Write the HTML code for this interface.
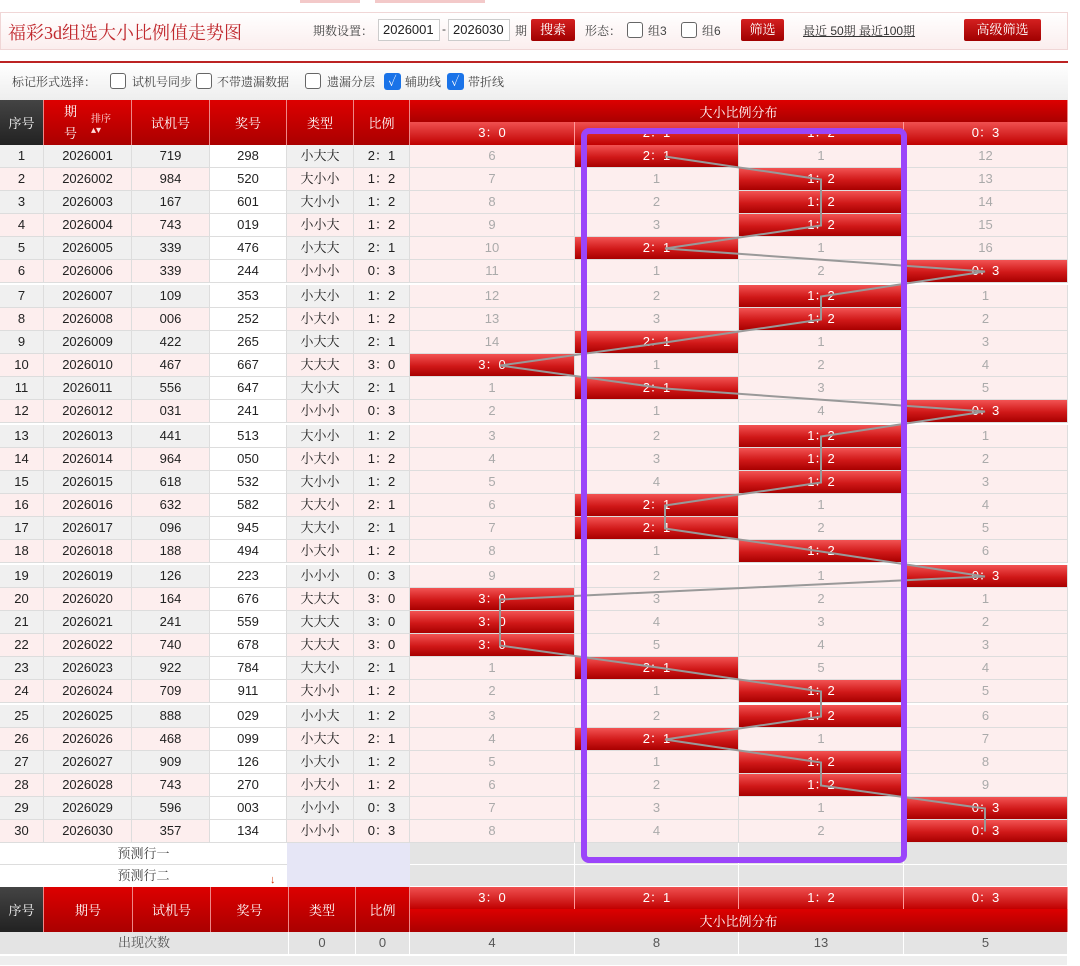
<!DOCTYPE html>
<html><head><meta charset="utf-8"><style>
*{margin:0;padding:0;box-sizing:border-box}
body{width:1080px;height:962px;overflow:hidden;background:#fff;font-family:"Liberation Sans","Noto Serif CJK SC",serif;font-size:13px;color:#222;position:relative}
.abs{position:absolute}
.top{left:0;top:12px;width:1068px;height:38px;border:1px solid #f0d6d6;background:linear-gradient(#fff,#fbeeee)}
.title{left:8px;top:19px;font-size:18px;color:#c0282d;font-family:"Liberation Serif","Noto Serif CJK SC",serif}
.lbl{font-size:12px;color:#444;top:22px}
.inp{top:19px;height:22px;border:1px solid #ccc;background:#fff;font-size:13px;line-height:20px;padding-left:4px;font-family:"Liberation Sans",sans-serif}
.btn{background:linear-gradient(#d42020,#a00000);color:#fff;font-size:13px;text-align:center;line-height:22px;height:22px;border-radius:2px}
.cb{width:16px;height:16px;border:1px solid #666;border-radius:3px;background:#fff}
.cbc{width:17px;height:17px;border-radius:3px;background:#1a73e8;color:#fff;font-size:13px;line-height:17px;text-align:center}
.opt{left:0;top:61px;width:1068px;height:39px;border-top:2px solid #b22;background:linear-gradient(#fff,#eee)}
.r{position:absolute;left:0;height:23px;display:flex;width:1068px}
.r i{font-style:normal;display:block;height:23px;line-height:22px;text-align:center;border-right:1px solid #ddd;border-bottom:1px solid #ddd;font-size:13px}
.r i:nth-child(1){width:44px}.r i:nth-child(2){width:88px}.r i:nth-child(3){width:78px}.r i:nth-child(4){width:77px}.r i:nth-child(5){width:67px}.r i:nth-child(6){width:56px}.r i:nth-child(7){width:165px}.r i:nth-child(8){width:164px}.r i:nth-child(9){width:165px}.r i:nth-child(10){width:164px}
.o i{background:#f0f0f0}.e i{background:#fdeeee}
.r i.w{background:#fff}
.r i.m{background:#fdeeee;color:#aaa}
.r i.h{background:linear-gradient(#f25353,#d01818 55%,#a80000);color:#fff}
.sep{border-bottom:3px solid #ccc}
.hd{background:linear-gradient(#d00,#a00);color:#fff;font-size:13px;display:flex;align-items:center;justify-content:center;position:absolute;border-right:1px solid #e88}
.sub{background:linear-gradient(#f05050,#c00000);color:#fff;position:absolute;text-align:center;line-height:22px;border-right:1px solid #f99;font-size:13px}
.g{background:#e4e4e4;position:absolute;border-right:1px solid #fff;border-bottom:1px solid #fff;text-align:center;line-height:22px;color:#555}
</style></head><body>
<div class="abs" style="left:300px;top:0;width:60px;height:3px;background:#f3c9c9"></div>
<div class="abs" style="left:375px;top:0;width:110px;height:3px;background:#f3c9c9"></div>
<div class="abs top"></div>
<div class="abs title">福彩3d组选大小比例值走势图</div>
<div class="abs lbl" style="left:313px">期数设置：</div>
<div class="abs inp" style="left:378px;width:62px">2026001</div>
<div class="abs lbl" style="left:442px">-</div>
<div class="abs inp" style="left:448px;width:62px">2026030</div>
<div class="abs lbl" style="left:515px">期</div>
<div class="abs btn" style="left:531px;top:19px;width:44px">搜索</div>
<div class="abs lbl" style="left:585px">形态：</div>
<div class="abs cb" style="left:627px;top:22px"></div><div class="abs lbl" style="left:648px">组3</div>
<div class="abs cb" style="left:681px;top:22px"></div><div class="abs lbl" style="left:702px">组6</div>
<div class="abs btn" style="left:741px;top:19px;width:43px">筛选</div>
<div class="abs lbl" style="left:803px;text-decoration:underline;color:#333">最近 50期 最近100期</div>
<div class="abs btn" style="left:964px;top:19px;width:77px">高级筛选</div>
<div class="abs opt"></div>
<div class="abs lbl" style="left:12px;top:73px">标记形式选择：</div>
<div class="abs cb" style="left:110px;top:73px"></div><div class="abs lbl" style="left:132px;top:73px">试机号同步</div>
<div class="abs cb" style="left:196px;top:73px"></div><div class="abs lbl" style="left:217px;top:73px">不带遗漏数据</div>
<div class="abs cb" style="left:305px;top:73px"></div><div class="abs lbl" style="left:327px;top:73px">遗漏分层</div>
<div class="abs cbc" style="left:384px;top:73px">✓</div><div class="abs lbl" style="left:405px;top:73px">辅助线</div>
<div class="abs cbc" style="left:447px;top:73px">✓</div><div class="abs lbl" style="left:468px;top:73px">带折线</div>

<div class="hd" style="left:0;top:100px;width:44px;height:45px;background:linear-gradient(#444,#222)">序号</div>
<div class="hd" style="left:44px;top:100px;width:88px;height:45px"><span style="line-height:22px;margin-right:14px">期<br>号</span><span style="font-size:10px;color:#fdd">排序<br>▴▾</span></div>
<div class="hd" style="left:132px;top:100px;width:78px;height:45px">试机号</div>
<div class="hd" style="left:210px;top:100px;width:77px;height:45px">奖号</div>
<div class="hd" style="left:287px;top:100px;width:67px;height:45px">类型</div>
<div class="hd" style="left:354px;top:100px;width:56px;height:45px">比例</div>
<div class="hd" style="left:410px;top:100px;width:658px;height:22px">大小比例分布</div>
<div class="sub" style="left:410px;top:122px;width:165px;height:23px">3：0</div>
<div class="sub" style="left:575px;top:122px;width:164px;height:23px">2：1</div>
<div class="sub" style="left:739px;top:122px;width:165px;height:23px">1：2</div>
<div class="sub" style="left:904px;top:122px;width:164px;height:23px">0：3</div>

<div class="r o" style="top:145px"><i>1</i><i>2026001</i><i>719</i><i class="w">298</i><i>小大大</i><i>2：1</i><i class="m">6</i><i class="h">2：1</i><i class="m">1</i><i class="m">12</i></div>
<div class="r e" style="top:168px"><i>2</i><i>2026002</i><i>984</i><i class="w">520</i><i>大小小</i><i>1：2</i><i class="m">7</i><i class="m">1</i><i class="h">1：2</i><i class="m">13</i></div>
<div class="r o" style="top:191px"><i>3</i><i>2026003</i><i>167</i><i class="w">601</i><i>大小小</i><i>1：2</i><i class="m">8</i><i class="m">2</i><i class="h">1：2</i><i class="m">14</i></div>
<div class="r e" style="top:214px"><i>4</i><i>2026004</i><i>743</i><i class="w">019</i><i>小小大</i><i>1：2</i><i class="m">9</i><i class="m">3</i><i class="h">1：2</i><i class="m">15</i></div>
<div class="r o" style="top:237px"><i>5</i><i>2026005</i><i>339</i><i class="w">476</i><i>小大大</i><i>2：1</i><i class="m">10</i><i class="h">2：1</i><i class="m">1</i><i class="m">16</i></div>
<div class="r e" style="top:260px;height:25px"><i class="sep">6</i><i class="sep">2026006</i><i class="sep">339</i><i class="w sep">244</i><i class="sep">小小小</i><i class="sep">0：3</i><i class="m sep">11</i><i class="m sep">1</i><i class="m sep">2</i><i class="h sep">0：3</i></div>

<div class="r o" style="top:285px"><i>7</i><i>2026007</i><i>109</i><i class="w">353</i><i>小大小</i><i>1：2</i><i class="m">12</i><i class="m">2</i><i class="h">1：2</i><i class="m">1</i></div>
<div class="r e" style="top:308px"><i>8</i><i>2026008</i><i>006</i><i class="w">252</i><i>小大小</i><i>1：2</i><i class="m">13</i><i class="m">3</i><i class="h">1：2</i><i class="m">2</i></div>
<div class="r o" style="top:331px"><i>9</i><i>2026009</i><i>422</i><i class="w">265</i><i>小大大</i><i>2：1</i><i class="m">14</i><i class="h">2：1</i><i class="m">1</i><i class="m">3</i></div>
<div class="r e" style="top:354px"><i>10</i><i>2026010</i><i>467</i><i class="w">667</i><i>大大大</i><i>3：0</i><i class="h">3：0</i><i class="m">1</i><i class="m">2</i><i class="m">4</i></div>
<div class="r o" style="top:377px"><i>11</i><i>2026011</i><i>556</i><i class="w">647</i><i>大小大</i><i>2：1</i><i class="m">1</i><i class="h">2：1</i><i class="m">3</i><i class="m">5</i></div>
<div class="r e" style="top:400px;height:25px"><i class="sep">12</i><i class="sep">2026012</i><i class="sep">031</i><i class="w sep">241</i><i class="sep">小小小</i><i class="sep">0：3</i><i class="m sep">2</i><i class="m sep">1</i><i class="m sep">4</i><i class="h sep">0：3</i></div>

<div class="r o" style="top:425px"><i>13</i><i>2026013</i><i>441</i><i class="w">513</i><i>大小小</i><i>1：2</i><i class="m">3</i><i class="m">2</i><i class="h">1：2</i><i class="m">1</i></div>
<div class="r e" style="top:448px"><i>14</i><i>2026014</i><i>964</i><i class="w">050</i><i>小大小</i><i>1：2</i><i class="m">4</i><i class="m">3</i><i class="h">1：2</i><i class="m">2</i></div>
<div class="r o" style="top:471px"><i>15</i><i>2026015</i><i>618</i><i class="w">532</i><i>大小小</i><i>1：2</i><i class="m">5</i><i class="m">4</i><i class="h">1：2</i><i class="m">3</i></div>
<div class="r e" style="top:494px"><i>16</i><i>2026016</i><i>632</i><i class="w">582</i><i>大大小</i><i>2：1</i><i class="m">6</i><i class="h">2：1</i><i class="m">1</i><i class="m">4</i></div>
<div class="r o" style="top:517px"><i>17</i><i>2026017</i><i>096</i><i class="w">945</i><i>大大小</i><i>2：1</i><i class="m">7</i><i class="h">2：1</i><i class="m">2</i><i class="m">5</i></div>
<div class="r e" style="top:540px;height:25px"><i class="sep">18</i><i class="sep">2026018</i><i class="sep">188</i><i class="w sep">494</i><i class="sep">小大小</i><i class="sep">1：2</i><i class="m sep">8</i><i class="m sep">1</i><i class="h sep">1：2</i><i class="m sep">6</i></div>

<div class="r o" style="top:565px"><i>19</i><i>2026019</i><i>126</i><i class="w">223</i><i>小小小</i><i>0：3</i><i class="m">9</i><i class="m">2</i><i class="m">1</i><i class="h">0：3</i></div>
<div class="r e" style="top:588px"><i>20</i><i>2026020</i><i>164</i><i class="w">676</i><i>大大大</i><i>3：0</i><i class="h">3：0</i><i class="m">3</i><i class="m">2</i><i class="m">1</i></div>
<div class="r o" style="top:611px"><i>21</i><i>2026021</i><i>241</i><i class="w">559</i><i>大大大</i><i>3：0</i><i class="h">3：0</i><i class="m">4</i><i class="m">3</i><i class="m">2</i></div>
<div class="r e" style="top:634px"><i>22</i><i>2026022</i><i>740</i><i class="w">678</i><i>大大大</i><i>3：0</i><i class="h">3：0</i><i class="m">5</i><i class="m">4</i><i class="m">3</i></div>
<div class="r o" style="top:657px"><i>23</i><i>2026023</i><i>922</i><i class="w">784</i><i>大大小</i><i>2：1</i><i class="m">1</i><i class="h">2：1</i><i class="m">5</i><i class="m">4</i></div>
<div class="r e" style="top:680px;height:25px"><i class="sep">24</i><i class="sep">2026024</i><i class="sep">709</i><i class="w sep">911</i><i class="sep">大小小</i><i class="sep">1：2</i><i class="m sep">2</i><i class="m sep">1</i><i class="h sep">1：2</i><i class="m sep">5</i></div>

<div class="r o" style="top:705px"><i>25</i><i>2026025</i><i>888</i><i class="w">029</i><i>小小大</i><i>1：2</i><i class="m">3</i><i class="m">2</i><i class="h">1：2</i><i class="m">6</i></div>
<div class="r e" style="top:728px"><i>26</i><i>2026026</i><i>468</i><i class="w">099</i><i>小大大</i><i>2：1</i><i class="m">4</i><i class="h">2：1</i><i class="m">1</i><i class="m">7</i></div>
<div class="r o" style="top:751px"><i>27</i><i>2026027</i><i>909</i><i class="w">126</i><i>小大小</i><i>1：2</i><i class="m">5</i><i class="m">1</i><i class="h">1：2</i><i class="m">8</i></div>
<div class="r e" style="top:774px"><i>28</i><i>2026028</i><i>743</i><i class="w">270</i><i>小大小</i><i>1：2</i><i class="m">6</i><i class="m">2</i><i class="h">1：2</i><i class="m">9</i></div>
<div class="r o" style="top:797px"><i>29</i><i>2026029</i><i>596</i><i class="w">003</i><i>小小小</i><i>0：3</i><i class="m">7</i><i class="m">3</i><i class="m">1</i><i class="h">0：3</i></div>
<div class="r e" style="top:820px"><i>30</i><i>2026030</i><i>357</i><i class="w">134</i><i>小小小</i><i>0：3</i><i class="m">8</i><i class="m">4</i><i class="m">2</i><i class="h">0：3</i></div>

<div class="abs" style="left:0;top:843px;width:287px;height:22px;background:#fff;border-bottom:1px solid #ddd;text-align:center;line-height:21px;color:#444">预测行一</div>
<div class="abs" style="left:287px;top:843px;width:123px;height:44px;background:#e6e6f6"></div>
<div class="abs" style="left:0;top:865px;width:287px;height:22px;background:#fff;text-align:center;line-height:22px;color:#444">预测行二<span style="position:absolute;left:270px;top:4px;color:#d03000;font-size:11px">↓</span></div>
<div class="g" style="left:410px;top:843px;width:165px;height:22px"></div><div class="g" style="left:575px;top:843px;width:164px;height:22px"></div><div class="g" style="left:739px;top:843px;width:165px;height:22px"></div><div class="g" style="left:904px;top:843px;width:164px;height:22px"></div>
<div class="g" style="left:410px;top:865px;width:165px;height:22px"></div><div class="g" style="left:575px;top:865px;width:164px;height:22px"></div><div class="g" style="left:739px;top:865px;width:165px;height:22px"></div><div class="g" style="left:904px;top:865px;width:164px;height:22px"></div>

<div class="hd" style="left:0;top:887px;width:44px;height:45px;background:linear-gradient(#444,#222)">序号</div>
<div class="hd" style="left:44px;top:887px;width:89px;height:45px">期号</div>
<div class="hd" style="left:133px;top:887px;width:78px;height:45px">试机号</div>
<div class="hd" style="left:211px;top:887px;width:78px;height:45px">奖号</div>
<div class="hd" style="left:289px;top:887px;width:67px;height:45px">类型</div>
<div class="hd" style="left:356px;top:887px;width:54px;height:45px">比例</div>
<div class="sub" style="left:410px;top:887px;width:165px;height:22px">3：0</div>
<div class="sub" style="left:575px;top:887px;width:164px;height:22px">2：1</div>
<div class="sub" style="left:739px;top:887px;width:165px;height:22px">1：2</div>
<div class="sub" style="left:904px;top:887px;width:164px;height:22px">0：3</div>
<div class="hd" style="left:410px;top:909px;width:658px;height:23px">大小比例分布</div>

<div class="g" style="left:0;top:932px;width:289px;height:23px">出现次数</div>
<div class="g" style="left:289px;top:932px;width:67px;height:23px">0</div>
<div class="g" style="left:356px;top:932px;width:54px;height:23px">0</div>
<div class="g" style="left:410px;top:932px;width:165px;height:23px">4</div>
<div class="g" style="left:575px;top:932px;width:164px;height:23px">8</div>
<div class="g" style="left:739px;top:932px;width:165px;height:23px">13</div>
<div class="g" style="left:904px;top:932px;width:164px;height:23px">5</div>
<div class="g" style="left:0;top:956px;width:1068px;height:10px;background:#eee"></div>

<svg class="abs" style="left:0;top:0" width="1080" height="962">
<polyline fill="none" stroke="#999" stroke-width="2" points="665,156.5 821,179.5 821,202.5 821,225.5 665,248.5 985,271.5 821,296.5 821,319.5 665,342.5 500,365.5 665,388.5 985,411.5 821,436.5 821,459.5 821,482.5 665,505.5 665,528.5 821,551.5 985,576.5 500,599.5 500,622.5 500,645.5 665,668.5 821,691.5 821,716.5 665,739.5 821,762.5 821,785.5 985,808.5 985,831.5"/>
<rect x="584" y="131" width="320" height="729" rx="5" fill="none" stroke="#9b45fa" stroke-width="6"/>
</svg>
</body></html>
